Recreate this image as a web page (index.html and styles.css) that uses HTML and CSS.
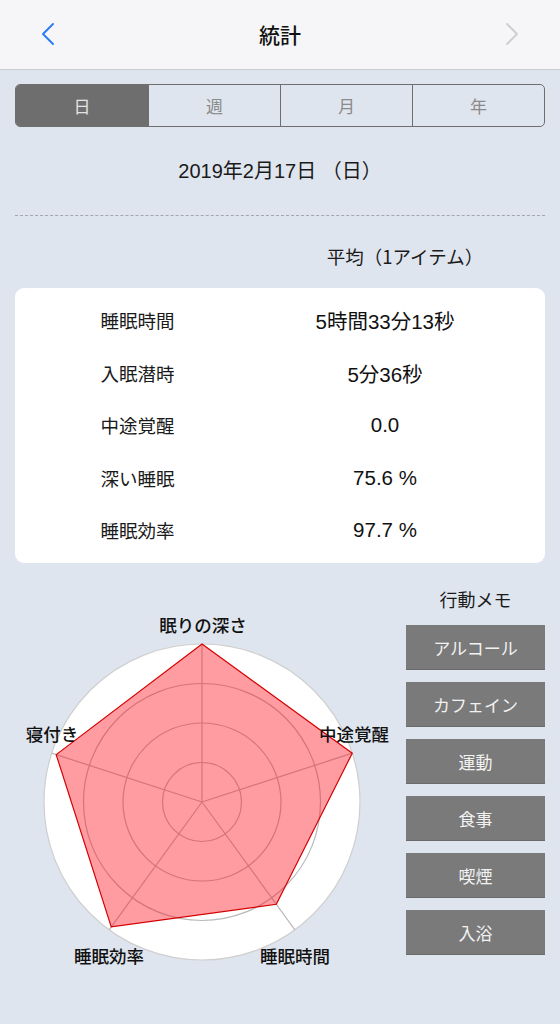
FILE: index.html
```html
<!DOCTYPE html>
<html lang="ja">
<head>
<meta charset="utf-8">
<title>統計</title>
<link rel="stylesheet" href="styles.css">
</head>
<body>
<div class="screen">
  <header class="navbar">
    <svg class="chev" width="14" height="24" viewBox="0 0 14 24"><path d="M12 2 L2 12 L12 22" fill="none" stroke="#2f7cf6" stroke-width="2" stroke-linecap="round" stroke-linejoin="round"/></svg>
    <h1 class="title">統計</h1>
    <svg class="chev" width="14" height="24" viewBox="0 0 14 24"><path d="M2 2 L12 12 L2 22" fill="none" stroke="#cfd0d4" stroke-width="2" stroke-linecap="round" stroke-linejoin="round"/></svg>
  </header>

  <main class="main">
    <div class="segmented">
      <div class="seg seg-active">日</div>
      <div class="seg">週</div>
      <div class="seg">月</div>
      <div class="seg">年</div>
    </div>

    <div class="date">2019年2月17日 （日）</div>

    <div class="avg-header">
      <span></span>
      <span class="avg-title">平均（1アイテム）</span>
    </div>

    <section class="card">
      <div class="row"><span class="label">睡眠時間</span><span class="value">5時間33分13秒</span></div>
      <div class="row"><span class="label">入眠潜時</span><span class="value">5分36秒</span></div>
      <div class="row"><span class="label">中途覚醒</span><span class="value">0.0</span></div>
      <div class="row"><span class="label">深い睡眠</span><span class="value">75.6 %</span></div>
      <div class="row"><span class="label">睡眠効率</span><span class="value">97.7 %</span></div>
    </section>

    <div class="lower">
      <svg class="radar" width="375" height="440" viewBox="15 562 375 440">
        <circle cx="202" cy="801" r="158" fill="#ffffff" stroke="#cfcfcf" stroke-width="1.2"/>
        <g fill="none" stroke="#b9b9b9" stroke-width="1.2">
          <circle cx="202" cy="801" r="118.5"/>
          <circle cx="202" cy="801" r="79"/>
          <circle cx="202" cy="801" r="39.5"/>
          <line x1="202" y1="801" x2="202" y2="643"/>
          <line x1="202" y1="801" x2="352.27" y2="752.18"/>
          <line x1="202" y1="801" x2="294.87" y2="928.83"/>
          <line x1="202" y1="801" x2="109.13" y2="928.83"/>
          <line x1="202" y1="801" x2="51.73" y2="752.18"/>
        </g>
        <polygon points="202,643 352.27,752.18 276.3,903.3 111.25,925.9 56.2,753.6" fill="rgba(255,20,30,0.42)" stroke="#d40000" stroke-width="1.2" stroke-linejoin="miter"/>
        <g class="axis-label" text-anchor="middle">
          <text x="203" y="631">眠りの深さ</text>
          <text x="354" y="740">中途覚醒</text>
          <text x="52" y="740">寝付き</text>
          <text x="109" y="962">睡眠効率</text>
          <text x="295" y="962">睡眠時間</text>
        </g>
      </svg>

      <aside class="memo">
        <div class="memo-title">行動メモ</div>
        <div class="memo-list">
          <div class="memo-btn">アルコール</div>
          <div class="memo-btn">カフェイン</div>
          <div class="memo-btn">運動</div>
          <div class="memo-btn">食事</div>
          <div class="memo-btn">喫煙</div>
          <div class="memo-btn">入浴</div>
        </div>
      </aside>
    </div>
  </main>
</div>
</body>
</html>
```

FILE: styles.css
```css
* { box-sizing: border-box; }

html, body {
  margin: 0;
  padding: 0;
}

body {
  background: #dfe5ee;
  font-family: "Liberation Sans", "Noto Sans CJK JP", sans-serif;
  color: #1c1c1e;
}

.screen {
  width: 560px;
  height: 1024px;
  overflow: hidden;
}

.navbar {
  height: 70px;
  background: #f6f6f8;
  border-bottom: 1px solid #c9ccd2;
  display: flex;
  align-items: center;
  justify-content: space-between;
  padding: 0 41px 2px 41px;
}

.chev { display: block; }

.title {
  margin: 0;
  font-size: 21px;
  font-weight: 500;
  line-height: 24px;
  color: #111;
  font-family: "Noto Sans CJK JP", sans-serif;
}

.main {
  padding: 0 15px;
}

.segmented {
  margin-top: 14px;
  height: 43px;
  display: grid;
  grid-template-columns: repeat(4, 1fr);
  border: 1px solid #6e6e6e;
  border-radius: 5px;
  overflow: hidden;
}

.seg {
  display: flex;
  align-items: center;
  justify-content: center;
  font-size: 17px;
  color: #8a8a8a;
  border-left: 1px solid #6e6e6e;
  font-family: "Noto Sans CJK JP", sans-serif;
}

.seg:first-child { border-left: none; }

.seg-active {
  background: #6e6e6e;
  color: #e4e4e4;
}

.date {
  height: 89px;
  display: flex;
  align-items: center;
  justify-content: center;
  font-size: 20px;
  color: #1a1a1a;
  border-bottom: 1px dashed #a3a7ad;
  padding-bottom: 4px;
}

.avg-header {
  height: 72px;
  display: grid;
  grid-template-columns: 245px 250px;
  padding-top: 27px;
}

.avg-title {
  text-align: center;
  font-size: 18.5px;
  line-height: 26px;
  color: #1a1a1a;
  padding-left: 40px;
  font-family: "Noto Sans CJK JP", sans-serif;
}

.card {
  background: #ffffff;
  border-radius: 9px;
  height: 275px;
  padding: 6px 0 6px 0;
}

.row {
  height: 52.5px;
  display: grid;
  grid-template-columns: 245px 250px;
  align-items: center;
}

.label {
  text-align: center;
  font-size: 18.5px;
  color: #1a1a1a;
  font-family: "Noto Sans CJK JP", sans-serif;
}

.value {
  text-align: center;
  font-size: 20.5px;
  color: #111;
}

.lower {
  display: flex;
  justify-content: space-between;
  align-items: flex-start;
}

.radar {
  display: block;
}

.axis-label text {
  font-family: "Noto Sans CJK JP", sans-serif;
  font-size: 17.5px;
  font-weight: 500;
  fill: #111;
}

.memo {
  width: 139px;
  padding-top: 23px;
}

.memo-title {
  text-align: center;
  font-size: 18px;
  line-height: 26px;
  color: #1a1a1a;
  margin-bottom: 13px;
  font-family: "Noto Sans CJK JP", sans-serif;
}

.memo-list {
  display: flex;
  flex-direction: column;
  gap: 12px;
}

.memo-btn {
  height: 45px;
  background: #7a7a7a;
  border-bottom: 1px solid #6a6a6a;
  color: #f2f2f2;
  font-size: 17px;
  display: flex;
  align-items: center;
  justify-content: center;
  font-family: "Noto Sans CJK JP", sans-serif;
}
```
